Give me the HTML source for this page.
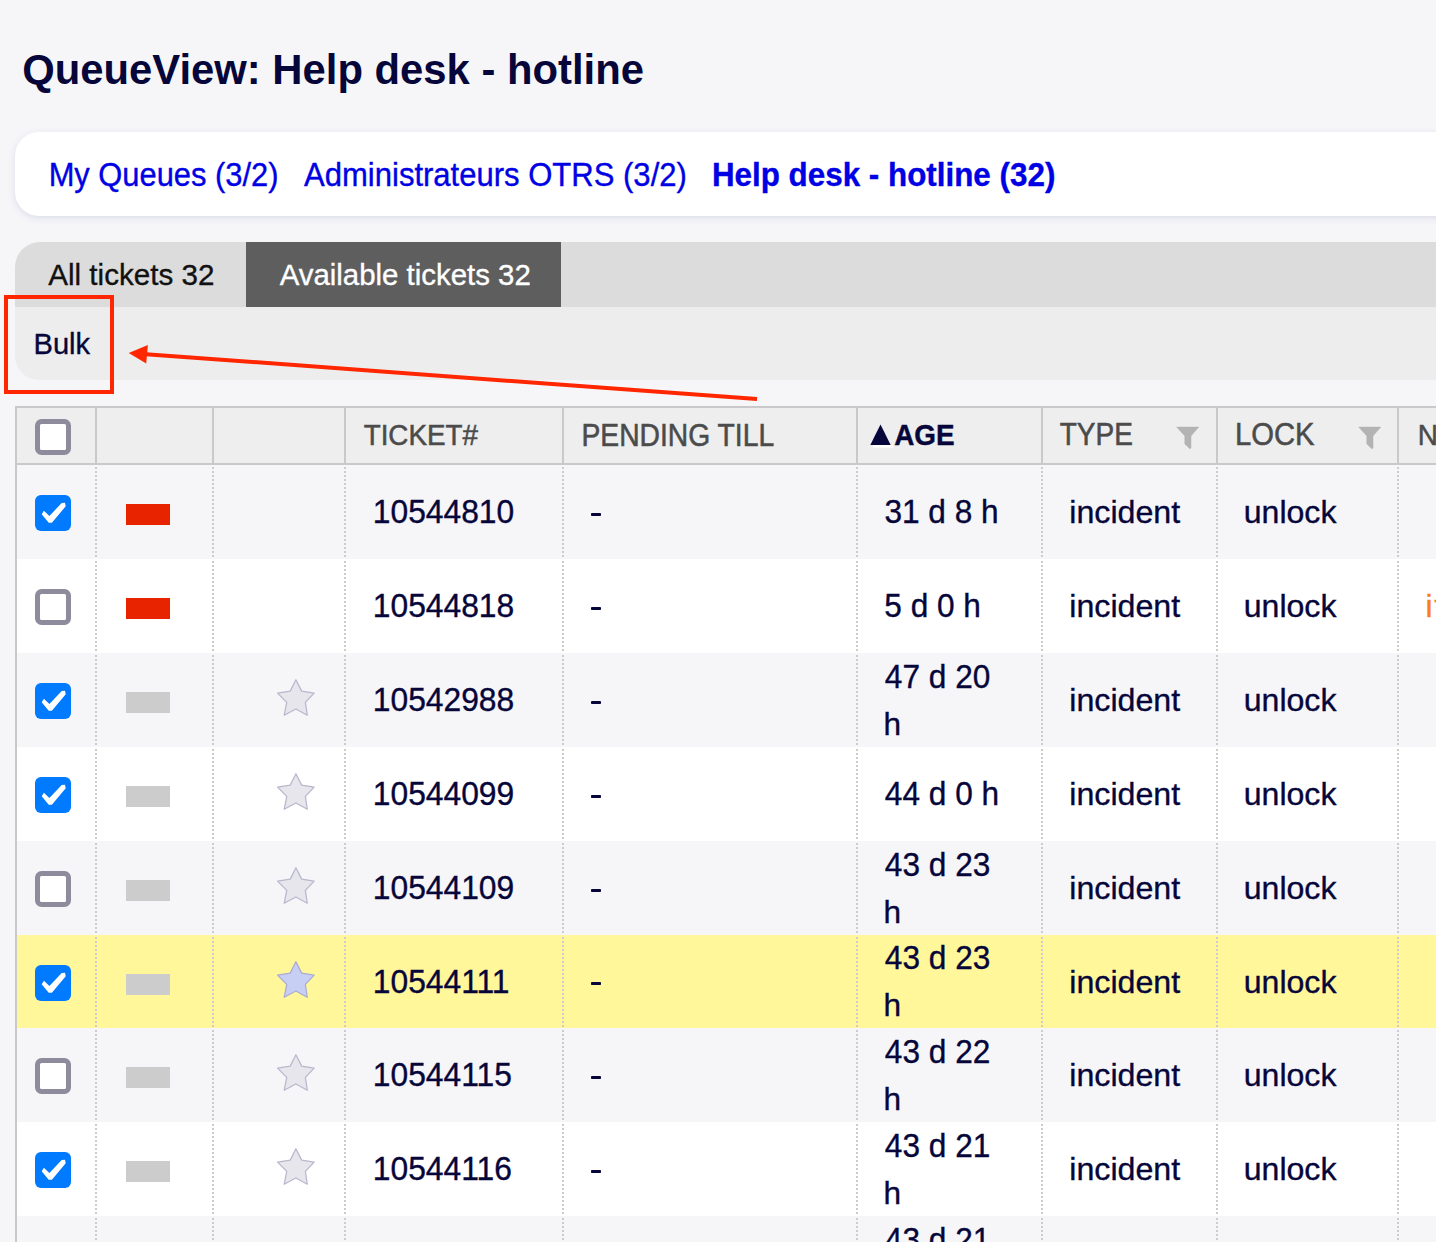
<!DOCTYPE html>
<html><head><meta charset="utf-8"><style>
html,body{margin:0;padding:0;}
body{width:1436px;height:1242px;overflow:hidden;position:relative;background:#f6f6f9;font-family:"Liberation Sans",sans-serif;}
.t{position:absolute;white-space:nowrap;}
.r{position:absolute;}
</style></head><body>
<div class="t" style="left:22.29px;top:37.81px;font-size:41.8px;line-height:63px;color:#06063a;font-weight:bold;-webkit-text-stroke:0px #06063a;">QueueView: Help desk - hotline</div>
<div class="r" style="left:15px;top:132px;width:1500px;height:84px;background:#fff;border-radius:24px;box-shadow:0 2px 7px rgba(50,50,130,0.13);"></div>
<div class="t" style="left:48.67px;top:152.60px;font-size:30.86px;line-height:46px;color:#0000e4;transform:scaleY(1.05);transform-origin:0 33.70px;-webkit-text-stroke:0.35px #0000e4;">My Queues (3/2)</div>
<div class="t" style="left:304.04px;top:152.04px;font-size:31.04px;line-height:47px;color:#0000e4;transform:scaleY(1.05);transform-origin:0 34.26px;-webkit-text-stroke:0.35px #0000e4;">Administrateurs OTRS (3/2)</div>
<div class="t" style="left:711.90px;top:151.92px;font-size:31.38px;line-height:47px;color:#0000e4;font-weight:bold;transform:scaleY(1.03);transform-origin:0 34.38px;-webkit-text-stroke:0.35px #0000e4;">Help desk - hotline (32)</div>
<div class="r" style="left:15px;top:242px;width:1500px;height:65px;background:#dcdcdc;border-top-left-radius:25px;"></div>
<div class="r" style="left:246px;top:242px;width:315px;height:65px;background:#5e5e5e;"></div>
<div class="t" style="left:48.24px;top:252.74px;font-size:29.6px;line-height:44px;color:#111;-webkit-text-stroke:0.35px #111;">All tickets 32</div>
<div class="t" style="left:279.64px;top:252.80px;font-size:29.42px;line-height:44px;color:#fff;-webkit-text-stroke:0.35px #fff;">Available tickets 32</div>
<div class="r" style="left:15px;top:307px;width:1500px;height:73px;background:#ededed;border-bottom-left-radius:24px;"></div>
<div class="t" style="left:33.51px;top:321.91px;font-size:29.1px;line-height:44px;color:#06063a;transform:scaleY(1.04);transform-origin:0 32.09px;-webkit-text-stroke:0.35px #06063a;">Bulk</div>
<div class="r" style="left:15px;top:406px;width:1500px;height:55px;background:#eeeeee;border-top:2px solid #c9c9c9;border-bottom:2px solid #c9c9c9;"></div>
<div class="r" style="left:15px;top:406px;width:2px;height:900px;background:#c9c9c9;"></div>
<div class="r" style="left:17px;top:465.000px;width:1500px;height:94.000px;background:#f6f6f9;"></div>
<div class="r" style="left:17px;top:559.000px;width:1500px;height:94.000px;background:#ffffff;"></div>
<div class="r" style="left:17px;top:653.000px;width:1500px;height:94.000px;background:#f6f6f9;"></div>
<div class="r" style="left:17px;top:747.000px;width:1500px;height:94.000px;background:#ffffff;"></div>
<div class="r" style="left:17px;top:841.000px;width:1500px;height:94.000px;background:#f6f6f9;"></div>
<div class="r" style="left:17px;top:935.000px;width:1500px;height:93.000px;background:#fff79a;"></div>
<div class="r" style="left:17px;top:1028.000px;width:1500px;height:94.000px;background:#f6f6f9;"></div>
<div class="r" style="left:17px;top:1122.000px;width:1500px;height:94.000px;background:#ffffff;"></div>
<div class="r" style="left:17px;top:1216.000px;width:1500px;height:94.000px;background:#f6f6f9;"></div>
<div id="rowsend"></div>
<div class="r" style="left:95px;top:408px;width:2px;height:55px;background:#c9c9c9;"></div>
<div class="r" style="left:95px;top:467px;width:2px;height:92px;background:repeating-linear-gradient(to bottom,#cccccc 0,#cccccc 2px,transparent 2px,transparent 4px);"></div>
<div class="r" style="left:95px;top:561px;width:2px;height:92px;background:repeating-linear-gradient(to bottom,#cccccc 0,#cccccc 2px,transparent 2px,transparent 4px);"></div>
<div class="r" style="left:95px;top:655px;width:2px;height:92px;background:repeating-linear-gradient(to bottom,#cccccc 0,#cccccc 2px,transparent 2px,transparent 4px);"></div>
<div class="r" style="left:95px;top:749px;width:2px;height:92px;background:repeating-linear-gradient(to bottom,#cccccc 0,#cccccc 2px,transparent 2px,transparent 4px);"></div>
<div class="r" style="left:95px;top:843px;width:2px;height:92px;background:repeating-linear-gradient(to bottom,#cccccc 0,#cccccc 2px,transparent 2px,transparent 4px);"></div>
<div class="r" style="left:95px;top:937px;width:2px;height:91px;background:repeating-linear-gradient(to bottom,#cccccc 0,#cccccc 2px,transparent 2px,transparent 4px);"></div>
<div class="r" style="left:95px;top:1030px;width:2px;height:92px;background:repeating-linear-gradient(to bottom,#cccccc 0,#cccccc 2px,transparent 2px,transparent 4px);"></div>
<div class="r" style="left:95px;top:1124px;width:2px;height:92px;background:repeating-linear-gradient(to bottom,#cccccc 0,#cccccc 2px,transparent 2px,transparent 4px);"></div>
<div class="r" style="left:95px;top:1218px;width:2px;height:92px;background:repeating-linear-gradient(to bottom,#cccccc 0,#cccccc 2px,transparent 2px,transparent 4px);"></div>
<div class="r" style="left:212px;top:408px;width:2px;height:55px;background:#c9c9c9;"></div>
<div class="r" style="left:212px;top:467px;width:2px;height:92px;background:repeating-linear-gradient(to bottom,#cccccc 0,#cccccc 2px,transparent 2px,transparent 4px);"></div>
<div class="r" style="left:212px;top:561px;width:2px;height:92px;background:repeating-linear-gradient(to bottom,#cccccc 0,#cccccc 2px,transparent 2px,transparent 4px);"></div>
<div class="r" style="left:212px;top:655px;width:2px;height:92px;background:repeating-linear-gradient(to bottom,#cccccc 0,#cccccc 2px,transparent 2px,transparent 4px);"></div>
<div class="r" style="left:212px;top:749px;width:2px;height:92px;background:repeating-linear-gradient(to bottom,#cccccc 0,#cccccc 2px,transparent 2px,transparent 4px);"></div>
<div class="r" style="left:212px;top:843px;width:2px;height:92px;background:repeating-linear-gradient(to bottom,#cccccc 0,#cccccc 2px,transparent 2px,transparent 4px);"></div>
<div class="r" style="left:212px;top:937px;width:2px;height:91px;background:repeating-linear-gradient(to bottom,#cccccc 0,#cccccc 2px,transparent 2px,transparent 4px);"></div>
<div class="r" style="left:212px;top:1030px;width:2px;height:92px;background:repeating-linear-gradient(to bottom,#cccccc 0,#cccccc 2px,transparent 2px,transparent 4px);"></div>
<div class="r" style="left:212px;top:1124px;width:2px;height:92px;background:repeating-linear-gradient(to bottom,#cccccc 0,#cccccc 2px,transparent 2px,transparent 4px);"></div>
<div class="r" style="left:212px;top:1218px;width:2px;height:92px;background:repeating-linear-gradient(to bottom,#cccccc 0,#cccccc 2px,transparent 2px,transparent 4px);"></div>
<div class="r" style="left:344px;top:408px;width:2px;height:55px;background:#c9c9c9;"></div>
<div class="r" style="left:344px;top:467px;width:2px;height:92px;background:repeating-linear-gradient(to bottom,#cccccc 0,#cccccc 2px,transparent 2px,transparent 4px);"></div>
<div class="r" style="left:344px;top:561px;width:2px;height:92px;background:repeating-linear-gradient(to bottom,#cccccc 0,#cccccc 2px,transparent 2px,transparent 4px);"></div>
<div class="r" style="left:344px;top:655px;width:2px;height:92px;background:repeating-linear-gradient(to bottom,#cccccc 0,#cccccc 2px,transparent 2px,transparent 4px);"></div>
<div class="r" style="left:344px;top:749px;width:2px;height:92px;background:repeating-linear-gradient(to bottom,#cccccc 0,#cccccc 2px,transparent 2px,transparent 4px);"></div>
<div class="r" style="left:344px;top:843px;width:2px;height:92px;background:repeating-linear-gradient(to bottom,#cccccc 0,#cccccc 2px,transparent 2px,transparent 4px);"></div>
<div class="r" style="left:344px;top:937px;width:2px;height:91px;background:repeating-linear-gradient(to bottom,#cccccc 0,#cccccc 2px,transparent 2px,transparent 4px);"></div>
<div class="r" style="left:344px;top:1030px;width:2px;height:92px;background:repeating-linear-gradient(to bottom,#cccccc 0,#cccccc 2px,transparent 2px,transparent 4px);"></div>
<div class="r" style="left:344px;top:1124px;width:2px;height:92px;background:repeating-linear-gradient(to bottom,#cccccc 0,#cccccc 2px,transparent 2px,transparent 4px);"></div>
<div class="r" style="left:344px;top:1218px;width:2px;height:92px;background:repeating-linear-gradient(to bottom,#cccccc 0,#cccccc 2px,transparent 2px,transparent 4px);"></div>
<div class="r" style="left:562px;top:408px;width:2px;height:55px;background:#c9c9c9;"></div>
<div class="r" style="left:562px;top:467px;width:2px;height:92px;background:repeating-linear-gradient(to bottom,#cccccc 0,#cccccc 2px,transparent 2px,transparent 4px);"></div>
<div class="r" style="left:562px;top:561px;width:2px;height:92px;background:repeating-linear-gradient(to bottom,#cccccc 0,#cccccc 2px,transparent 2px,transparent 4px);"></div>
<div class="r" style="left:562px;top:655px;width:2px;height:92px;background:repeating-linear-gradient(to bottom,#cccccc 0,#cccccc 2px,transparent 2px,transparent 4px);"></div>
<div class="r" style="left:562px;top:749px;width:2px;height:92px;background:repeating-linear-gradient(to bottom,#cccccc 0,#cccccc 2px,transparent 2px,transparent 4px);"></div>
<div class="r" style="left:562px;top:843px;width:2px;height:92px;background:repeating-linear-gradient(to bottom,#cccccc 0,#cccccc 2px,transparent 2px,transparent 4px);"></div>
<div class="r" style="left:562px;top:937px;width:2px;height:91px;background:repeating-linear-gradient(to bottom,#cccccc 0,#cccccc 2px,transparent 2px,transparent 4px);"></div>
<div class="r" style="left:562px;top:1030px;width:2px;height:92px;background:repeating-linear-gradient(to bottom,#cccccc 0,#cccccc 2px,transparent 2px,transparent 4px);"></div>
<div class="r" style="left:562px;top:1124px;width:2px;height:92px;background:repeating-linear-gradient(to bottom,#cccccc 0,#cccccc 2px,transparent 2px,transparent 4px);"></div>
<div class="r" style="left:562px;top:1218px;width:2px;height:92px;background:repeating-linear-gradient(to bottom,#cccccc 0,#cccccc 2px,transparent 2px,transparent 4px);"></div>
<div class="r" style="left:856px;top:408px;width:2px;height:55px;background:#c9c9c9;"></div>
<div class="r" style="left:856px;top:467px;width:2px;height:92px;background:repeating-linear-gradient(to bottom,#cccccc 0,#cccccc 2px,transparent 2px,transparent 4px);"></div>
<div class="r" style="left:856px;top:561px;width:2px;height:92px;background:repeating-linear-gradient(to bottom,#cccccc 0,#cccccc 2px,transparent 2px,transparent 4px);"></div>
<div class="r" style="left:856px;top:655px;width:2px;height:92px;background:repeating-linear-gradient(to bottom,#cccccc 0,#cccccc 2px,transparent 2px,transparent 4px);"></div>
<div class="r" style="left:856px;top:749px;width:2px;height:92px;background:repeating-linear-gradient(to bottom,#cccccc 0,#cccccc 2px,transparent 2px,transparent 4px);"></div>
<div class="r" style="left:856px;top:843px;width:2px;height:92px;background:repeating-linear-gradient(to bottom,#cccccc 0,#cccccc 2px,transparent 2px,transparent 4px);"></div>
<div class="r" style="left:856px;top:937px;width:2px;height:91px;background:repeating-linear-gradient(to bottom,#cccccc 0,#cccccc 2px,transparent 2px,transparent 4px);"></div>
<div class="r" style="left:856px;top:1030px;width:2px;height:92px;background:repeating-linear-gradient(to bottom,#cccccc 0,#cccccc 2px,transparent 2px,transparent 4px);"></div>
<div class="r" style="left:856px;top:1124px;width:2px;height:92px;background:repeating-linear-gradient(to bottom,#cccccc 0,#cccccc 2px,transparent 2px,transparent 4px);"></div>
<div class="r" style="left:856px;top:1218px;width:2px;height:92px;background:repeating-linear-gradient(to bottom,#cccccc 0,#cccccc 2px,transparent 2px,transparent 4px);"></div>
<div class="r" style="left:1041px;top:408px;width:2px;height:55px;background:#c9c9c9;"></div>
<div class="r" style="left:1041px;top:467px;width:2px;height:92px;background:repeating-linear-gradient(to bottom,#cccccc 0,#cccccc 2px,transparent 2px,transparent 4px);"></div>
<div class="r" style="left:1041px;top:561px;width:2px;height:92px;background:repeating-linear-gradient(to bottom,#cccccc 0,#cccccc 2px,transparent 2px,transparent 4px);"></div>
<div class="r" style="left:1041px;top:655px;width:2px;height:92px;background:repeating-linear-gradient(to bottom,#cccccc 0,#cccccc 2px,transparent 2px,transparent 4px);"></div>
<div class="r" style="left:1041px;top:749px;width:2px;height:92px;background:repeating-linear-gradient(to bottom,#cccccc 0,#cccccc 2px,transparent 2px,transparent 4px);"></div>
<div class="r" style="left:1041px;top:843px;width:2px;height:92px;background:repeating-linear-gradient(to bottom,#cccccc 0,#cccccc 2px,transparent 2px,transparent 4px);"></div>
<div class="r" style="left:1041px;top:937px;width:2px;height:91px;background:repeating-linear-gradient(to bottom,#cccccc 0,#cccccc 2px,transparent 2px,transparent 4px);"></div>
<div class="r" style="left:1041px;top:1030px;width:2px;height:92px;background:repeating-linear-gradient(to bottom,#cccccc 0,#cccccc 2px,transparent 2px,transparent 4px);"></div>
<div class="r" style="left:1041px;top:1124px;width:2px;height:92px;background:repeating-linear-gradient(to bottom,#cccccc 0,#cccccc 2px,transparent 2px,transparent 4px);"></div>
<div class="r" style="left:1041px;top:1218px;width:2px;height:92px;background:repeating-linear-gradient(to bottom,#cccccc 0,#cccccc 2px,transparent 2px,transparent 4px);"></div>
<div class="r" style="left:1216px;top:408px;width:2px;height:55px;background:#c9c9c9;"></div>
<div class="r" style="left:1216px;top:467px;width:2px;height:92px;background:repeating-linear-gradient(to bottom,#cccccc 0,#cccccc 2px,transparent 2px,transparent 4px);"></div>
<div class="r" style="left:1216px;top:561px;width:2px;height:92px;background:repeating-linear-gradient(to bottom,#cccccc 0,#cccccc 2px,transparent 2px,transparent 4px);"></div>
<div class="r" style="left:1216px;top:655px;width:2px;height:92px;background:repeating-linear-gradient(to bottom,#cccccc 0,#cccccc 2px,transparent 2px,transparent 4px);"></div>
<div class="r" style="left:1216px;top:749px;width:2px;height:92px;background:repeating-linear-gradient(to bottom,#cccccc 0,#cccccc 2px,transparent 2px,transparent 4px);"></div>
<div class="r" style="left:1216px;top:843px;width:2px;height:92px;background:repeating-linear-gradient(to bottom,#cccccc 0,#cccccc 2px,transparent 2px,transparent 4px);"></div>
<div class="r" style="left:1216px;top:937px;width:2px;height:91px;background:repeating-linear-gradient(to bottom,#cccccc 0,#cccccc 2px,transparent 2px,transparent 4px);"></div>
<div class="r" style="left:1216px;top:1030px;width:2px;height:92px;background:repeating-linear-gradient(to bottom,#cccccc 0,#cccccc 2px,transparent 2px,transparent 4px);"></div>
<div class="r" style="left:1216px;top:1124px;width:2px;height:92px;background:repeating-linear-gradient(to bottom,#cccccc 0,#cccccc 2px,transparent 2px,transparent 4px);"></div>
<div class="r" style="left:1216px;top:1218px;width:2px;height:92px;background:repeating-linear-gradient(to bottom,#cccccc 0,#cccccc 2px,transparent 2px,transparent 4px);"></div>
<div class="r" style="left:1397px;top:408px;width:2px;height:55px;background:#c9c9c9;"></div>
<div class="r" style="left:1397px;top:467px;width:2px;height:92px;background:repeating-linear-gradient(to bottom,#cccccc 0,#cccccc 2px,transparent 2px,transparent 4px);"></div>
<div class="r" style="left:1397px;top:561px;width:2px;height:92px;background:repeating-linear-gradient(to bottom,#cccccc 0,#cccccc 2px,transparent 2px,transparent 4px);"></div>
<div class="r" style="left:1397px;top:655px;width:2px;height:92px;background:repeating-linear-gradient(to bottom,#cccccc 0,#cccccc 2px,transparent 2px,transparent 4px);"></div>
<div class="r" style="left:1397px;top:749px;width:2px;height:92px;background:repeating-linear-gradient(to bottom,#cccccc 0,#cccccc 2px,transparent 2px,transparent 4px);"></div>
<div class="r" style="left:1397px;top:843px;width:2px;height:92px;background:repeating-linear-gradient(to bottom,#cccccc 0,#cccccc 2px,transparent 2px,transparent 4px);"></div>
<div class="r" style="left:1397px;top:937px;width:2px;height:91px;background:repeating-linear-gradient(to bottom,#cccccc 0,#cccccc 2px,transparent 2px,transparent 4px);"></div>
<div class="r" style="left:1397px;top:1030px;width:2px;height:92px;background:repeating-linear-gradient(to bottom,#cccccc 0,#cccccc 2px,transparent 2px,transparent 4px);"></div>
<div class="r" style="left:1397px;top:1124px;width:2px;height:92px;background:repeating-linear-gradient(to bottom,#cccccc 0,#cccccc 2px,transparent 2px,transparent 4px);"></div>
<div class="r" style="left:1397px;top:1218px;width:2px;height:92px;background:repeating-linear-gradient(to bottom,#cccccc 0,#cccccc 2px,transparent 2px,transparent 4px);"></div>
<div class="t" style="left:363.68px;top:414.86px;font-size:27.8px;line-height:42px;color:#4b4b4b;transform:scaleY(1.09);transform-origin:0 30.64px;-webkit-text-stroke:0.5px #4b4b4b;">TICKET#</div>
<div class="t" style="left:581.48px;top:414.70px;font-size:28.28px;line-height:42px;color:#4b4b4b;transform:scaleY(1.08);transform-origin:0 30.80px;-webkit-text-stroke:0.5px #4b4b4b;">PENDING TILL</div>
<svg class="r" style="left:860px;top:415px" width="40" height="40"><polygon points="10.3,9.6 20.5,-0.0 30.7,9.6" fill="none"/><polygon points="10.3,29.9 20.5,9.6 30.7,29.9" fill="#06063a"/><rect x="13" y="30" width="20" height="2.6" fill="#fff"/></svg>
<div class="t" style="left:894.21px;top:414.84px;font-size:27.85px;line-height:42px;color:#06063a;font-weight:bold;transform:scaleY(1.08);transform-origin:0 30.66px;-webkit-text-stroke:0.4px #06063a;">AGE</div>
<div class="t" style="left:1059.77px;top:414.79px;font-size:28.0px;line-height:42px;color:#4b4b4b;transform:scaleY(1.09);transform-origin:0 30.71px;-webkit-text-stroke:0.5px #4b4b4b;">TYPE</div>
<div class="t" style="left:1235.10px;top:413.38px;font-size:29.2px;line-height:44px;color:#4b4b4b;transform:scaleY(1.07);transform-origin:0 32.12px;-webkit-text-stroke:0.5px #4b4b4b;">LOCK</div>
<div class="t" style="left:1417.70px;top:414.79px;font-size:28px;line-height:42px;color:#4b4b4b;transform:scaleY(1.08);transform-origin:0 30.71px;-webkit-text-stroke:0.5px #4b4b4b;">N</div>
<svg class="r" style="left:1176px;top:425px" width="26" height="26"><path d="M0.7,2.1 L22.8,2.1 L15,10.9 L15,23 L13.8,23.8 L8.8,19 L8.8,10.9 Z" fill="#b3b3b3" stroke="#b3b3b3" stroke-width="0.5" stroke-linejoin="round"/></svg>
<svg class="r" style="left:1358px;top:425px" width="26" height="26"><path d="M0.7,2.1 L22.8,2.1 L15,10.9 L15,23 L13.8,23.8 L8.8,19 L8.8,10.9 Z" fill="#b3b3b3" stroke="#b3b3b3" stroke-width="0.5" stroke-linejoin="round"/></svg>
<svg class="r" style="left:35px;top:419.00px" width="36" height="36"><rect x="2.5" y="2.5" width="31" height="31" rx="4" fill="#fff" stroke="#8e8c9c" stroke-width="5"/></svg>
<svg class="r" style="left:35px;top:495.00px" width="36" height="36"><rect x="0" y="0" width="36" height="36" rx="6" fill="#007aff"/><polygon points="6.7,19.3 8.9,15.7 14.4,20.9 26.7,8 30,7.8 30.7,11.3 16.9,27.8 13.7,27.8" fill="#fff"/></svg>
<div class="r" style="left:126px;top:504.00px;width:44px;height:21px;background:#e82400;"></div>
<div class="t" style="left:372.78px;top:488.47px;font-size:31.8px;line-height:48px;color:#06063a;transform:scaleY(1.035);transform-origin:0 35.03px;-webkit-text-stroke:0.35px #06063a;">10544810</div>
<div class="r" style="left:591.4px;top:512.80px;width:9.6px;height:2.9px;background:#06063a;border-radius:0.8px;"></div>
<div class="t" style="left:884.40px;top:489.04px;font-size:31.6px;line-height:47px;color:#06063a;transform:scaleY(1.03);transform-origin:0 34.46px;-webkit-text-stroke:0.35px #06063a;">31 d 8 h</div>
<div class="t" style="left:1069.25px;top:488.34px;font-size:32.2px;line-height:48px;color:#06063a;-webkit-text-stroke:0.35px #06063a;">incident</div>
<div class="t" style="left:1243.72px;top:488.37px;font-size:32.1px;line-height:48px;color:#06063a;-webkit-text-stroke:0.35px #06063a;">unlock</div>
<svg class="r" style="left:35px;top:589.00px" width="36" height="36"><rect x="2.5" y="2.5" width="31" height="31" rx="4" fill="#fff" stroke="#8e8c9c" stroke-width="5"/></svg>
<div class="r" style="left:126px;top:598.00px;width:44px;height:21px;background:#e82400;"></div>
<div class="t" style="left:372.78px;top:582.47px;font-size:31.8px;line-height:48px;color:#06063a;transform:scaleY(1.035);transform-origin:0 35.03px;-webkit-text-stroke:0.35px #06063a;">10544818</div>
<div class="r" style="left:591.4px;top:606.80px;width:9.6px;height:2.9px;background:#06063a;border-radius:0.8px;"></div>
<div class="t" style="left:884.33px;top:583.04px;font-size:31.6px;line-height:47px;color:#06063a;transform:scaleY(1.03);transform-origin:0 34.46px;-webkit-text-stroke:0.35px #06063a;">5 d 0 h</div>
<div class="t" style="left:1069.25px;top:582.34px;font-size:32.2px;line-height:48px;color:#06063a;-webkit-text-stroke:0.35px #06063a;">incident</div>
<div class="t" style="left:1243.72px;top:582.37px;font-size:32.1px;line-height:48px;color:#06063a;-webkit-text-stroke:0.35px #06063a;">unlock</div>
<div class="t" style="left:1425.49px;top:583.08px;font-size:31.5px;line-height:47px;color:#ff7a1a;-webkit-text-stroke:0.35px #ff7a1a;">i</div>
<div class="t" style="left:1434.32px;top:583.08px;font-size:31.5px;line-height:47px;color:#ff7a1a;-webkit-text-stroke:0.35px #ff7a1a;">t</div>
<svg class="r" style="left:35px;top:683.00px" width="36" height="36"><rect x="0" y="0" width="36" height="36" rx="6" fill="#007aff"/><polygon points="6.7,19.3 8.9,15.7 14.4,20.9 26.7,8 30,7.8 30.7,11.3 16.9,27.8 13.7,27.8" fill="#fff"/></svg>
<div class="r" style="left:126px;top:692.00px;width:44px;height:21px;background:#cccccc;"></div>
<svg class="r" style="left:270px;top:671.00px" width="50" height="50"><polygon points="25.90,8.72 31.69,20.10 44.14,22.13 35.36,31.39 37.29,44.23 25.90,37.96 14.22,44.23 16.73,31.39 7.56,22.13 20.21,20.10" fill="#e6e6ec" stroke="#b8b8cc" stroke-width="1.25" stroke-linejoin="round"/></svg>
<div class="t" style="left:372.78px;top:676.47px;font-size:31.8px;line-height:48px;color:#06063a;transform:scaleY(1.035);transform-origin:0 35.03px;-webkit-text-stroke:0.35px #06063a;">10542988</div>
<div class="r" style="left:591.4px;top:700.80px;width:9.6px;height:2.9px;background:#06063a;border-radius:0.8px;"></div>
<div class="t" style="left:884.87px;top:653.54px;font-size:31.6px;line-height:47px;color:#06063a;transform:scaleY(1.03);transform-origin:0 34.46px;-webkit-text-stroke:0.35px #06063a;">47 d 20</div>
<div class="t" style="left:883.41px;top:700.54px;font-size:31.6px;line-height:47px;color:#06063a;-webkit-text-stroke:0.35px #06063a;">h</div>
<div class="t" style="left:1069.25px;top:676.34px;font-size:32.2px;line-height:48px;color:#06063a;-webkit-text-stroke:0.35px #06063a;">incident</div>
<div class="t" style="left:1243.72px;top:676.37px;font-size:32.1px;line-height:48px;color:#06063a;-webkit-text-stroke:0.35px #06063a;">unlock</div>
<svg class="r" style="left:35px;top:777.00px" width="36" height="36"><rect x="0" y="0" width="36" height="36" rx="6" fill="#007aff"/><polygon points="6.7,19.3 8.9,15.7 14.4,20.9 26.7,8 30,7.8 30.7,11.3 16.9,27.8 13.7,27.8" fill="#fff"/></svg>
<div class="r" style="left:126px;top:786.00px;width:44px;height:21px;background:#cccccc;"></div>
<svg class="r" style="left:270px;top:765.00px" width="50" height="50"><polygon points="25.90,8.72 31.69,20.10 44.14,22.13 35.36,31.39 37.29,44.23 25.90,37.96 14.22,44.23 16.73,31.39 7.56,22.13 20.21,20.10" fill="#e6e6ec" stroke="#b8b8cc" stroke-width="1.25" stroke-linejoin="round"/></svg>
<div class="t" style="left:372.78px;top:770.47px;font-size:31.8px;line-height:48px;color:#06063a;transform:scaleY(1.035);transform-origin:0 35.03px;-webkit-text-stroke:0.35px #06063a;">10544099</div>
<div class="r" style="left:591.4px;top:794.80px;width:9.6px;height:2.9px;background:#06063a;border-radius:0.8px;"></div>
<div class="t" style="left:884.87px;top:771.04px;font-size:31.6px;line-height:47px;color:#06063a;transform:scaleY(1.03);transform-origin:0 34.46px;-webkit-text-stroke:0.35px #06063a;">44 d 0 h</div>
<div class="t" style="left:1069.25px;top:770.34px;font-size:32.2px;line-height:48px;color:#06063a;-webkit-text-stroke:0.35px #06063a;">incident</div>
<div class="t" style="left:1243.72px;top:770.37px;font-size:32.1px;line-height:48px;color:#06063a;-webkit-text-stroke:0.35px #06063a;">unlock</div>
<svg class="r" style="left:35px;top:871.00px" width="36" height="36"><rect x="2.5" y="2.5" width="31" height="31" rx="4" fill="#fff" stroke="#8e8c9c" stroke-width="5"/></svg>
<div class="r" style="left:126px;top:880.00px;width:44px;height:21px;background:#cccccc;"></div>
<svg class="r" style="left:270px;top:859.00px" width="50" height="50"><polygon points="25.90,8.72 31.69,20.10 44.14,22.13 35.36,31.39 37.29,44.23 25.90,37.96 14.22,44.23 16.73,31.39 7.56,22.13 20.21,20.10" fill="#e6e6ec" stroke="#b8b8cc" stroke-width="1.25" stroke-linejoin="round"/></svg>
<div class="t" style="left:372.78px;top:864.47px;font-size:31.8px;line-height:48px;color:#06063a;transform:scaleY(1.035);transform-origin:0 35.03px;-webkit-text-stroke:0.35px #06063a;">10544109</div>
<div class="r" style="left:591.4px;top:888.80px;width:9.6px;height:2.9px;background:#06063a;border-radius:0.8px;"></div>
<div class="t" style="left:884.87px;top:841.54px;font-size:31.6px;line-height:47px;color:#06063a;transform:scaleY(1.03);transform-origin:0 34.46px;-webkit-text-stroke:0.35px #06063a;">43 d 23</div>
<div class="t" style="left:883.41px;top:888.54px;font-size:31.6px;line-height:47px;color:#06063a;-webkit-text-stroke:0.35px #06063a;">h</div>
<div class="t" style="left:1069.25px;top:864.34px;font-size:32.2px;line-height:48px;color:#06063a;-webkit-text-stroke:0.35px #06063a;">incident</div>
<div class="t" style="left:1243.72px;top:864.37px;font-size:32.1px;line-height:48px;color:#06063a;-webkit-text-stroke:0.35px #06063a;">unlock</div>
<svg class="r" style="left:35px;top:964.50px" width="36" height="36"><rect x="0" y="0" width="36" height="36" rx="6" fill="#007aff"/><polygon points="6.7,19.3 8.9,15.7 14.4,20.9 26.7,8 30,7.8 30.7,11.3 16.9,27.8 13.7,27.8" fill="#fff"/></svg>
<div class="r" style="left:126px;top:973.50px;width:44px;height:21px;background:#cccccc;"></div>
<svg class="r" style="left:270px;top:952.50px" width="50" height="50"><polygon points="25.90,8.72 31.69,20.10 44.14,22.13 35.36,31.39 37.29,44.23 25.90,37.96 14.22,44.23 16.73,31.39 7.56,22.13 20.21,20.10" fill="#c8cff5" stroke="#a9abd3" stroke-width="1.25" stroke-linejoin="round"/></svg>
<div class="t" style="left:372.78px;top:957.97px;font-size:31.8px;line-height:48px;color:#06063a;transform:scaleY(1.035);transform-origin:0 35.03px;-webkit-text-stroke:0.35px #06063a;">10544111</div>
<div class="r" style="left:591.4px;top:982.30px;width:9.6px;height:2.9px;background:#06063a;border-radius:0.8px;"></div>
<div class="t" style="left:884.87px;top:935.04px;font-size:31.6px;line-height:47px;color:#06063a;transform:scaleY(1.03);transform-origin:0 34.46px;-webkit-text-stroke:0.35px #06063a;">43 d 23</div>
<div class="t" style="left:883.41px;top:982.04px;font-size:31.6px;line-height:47px;color:#06063a;-webkit-text-stroke:0.35px #06063a;">h</div>
<div class="t" style="left:1069.25px;top:957.84px;font-size:32.2px;line-height:48px;color:#06063a;-webkit-text-stroke:0.35px #06063a;">incident</div>
<div class="t" style="left:1243.72px;top:957.87px;font-size:32.1px;line-height:48px;color:#06063a;-webkit-text-stroke:0.35px #06063a;">unlock</div>
<svg class="r" style="left:35px;top:1058.00px" width="36" height="36"><rect x="2.5" y="2.5" width="31" height="31" rx="4" fill="#fff" stroke="#8e8c9c" stroke-width="5"/></svg>
<div class="r" style="left:126px;top:1067.00px;width:44px;height:21px;background:#cccccc;"></div>
<svg class="r" style="left:270px;top:1046.00px" width="50" height="50"><polygon points="25.90,8.72 31.69,20.10 44.14,22.13 35.36,31.39 37.29,44.23 25.90,37.96 14.22,44.23 16.73,31.39 7.56,22.13 20.21,20.10" fill="#e6e6ec" stroke="#b8b8cc" stroke-width="1.25" stroke-linejoin="round"/></svg>
<div class="t" style="left:372.78px;top:1051.47px;font-size:31.8px;line-height:48px;color:#06063a;transform:scaleY(1.035);transform-origin:0 35.03px;-webkit-text-stroke:0.35px #06063a;">10544115</div>
<div class="r" style="left:591.4px;top:1075.80px;width:9.6px;height:2.9px;background:#06063a;border-radius:0.8px;"></div>
<div class="t" style="left:884.87px;top:1028.54px;font-size:31.6px;line-height:47px;color:#06063a;transform:scaleY(1.03);transform-origin:0 34.46px;-webkit-text-stroke:0.35px #06063a;">43 d 22</div>
<div class="t" style="left:883.41px;top:1075.54px;font-size:31.6px;line-height:47px;color:#06063a;-webkit-text-stroke:0.35px #06063a;">h</div>
<div class="t" style="left:1069.25px;top:1051.34px;font-size:32.2px;line-height:48px;color:#06063a;-webkit-text-stroke:0.35px #06063a;">incident</div>
<div class="t" style="left:1243.72px;top:1051.37px;font-size:32.1px;line-height:48px;color:#06063a;-webkit-text-stroke:0.35px #06063a;">unlock</div>
<svg class="r" style="left:35px;top:1152.00px" width="36" height="36"><rect x="0" y="0" width="36" height="36" rx="6" fill="#007aff"/><polygon points="6.7,19.3 8.9,15.7 14.4,20.9 26.7,8 30,7.8 30.7,11.3 16.9,27.8 13.7,27.8" fill="#fff"/></svg>
<div class="r" style="left:126px;top:1161.00px;width:44px;height:21px;background:#cccccc;"></div>
<svg class="r" style="left:270px;top:1140.00px" width="50" height="50"><polygon points="25.90,8.72 31.69,20.10 44.14,22.13 35.36,31.39 37.29,44.23 25.90,37.96 14.22,44.23 16.73,31.39 7.56,22.13 20.21,20.10" fill="#e6e6ec" stroke="#b8b8cc" stroke-width="1.25" stroke-linejoin="round"/></svg>
<div class="t" style="left:372.78px;top:1145.47px;font-size:31.8px;line-height:48px;color:#06063a;transform:scaleY(1.035);transform-origin:0 35.03px;-webkit-text-stroke:0.35px #06063a;">10544116</div>
<div class="r" style="left:591.4px;top:1169.80px;width:9.6px;height:2.9px;background:#06063a;border-radius:0.8px;"></div>
<div class="t" style="left:884.87px;top:1122.54px;font-size:31.6px;line-height:47px;color:#06063a;transform:scaleY(1.03);transform-origin:0 34.46px;-webkit-text-stroke:0.35px #06063a;">43 d 21</div>
<div class="t" style="left:883.41px;top:1169.54px;font-size:31.6px;line-height:47px;color:#06063a;-webkit-text-stroke:0.35px #06063a;">h</div>
<div class="t" style="left:1069.25px;top:1145.34px;font-size:32.2px;line-height:48px;color:#06063a;-webkit-text-stroke:0.35px #06063a;">incident</div>
<div class="t" style="left:1243.72px;top:1145.37px;font-size:32.1px;line-height:48px;color:#06063a;-webkit-text-stroke:0.35px #06063a;">unlock</div>
<svg class="r" style="left:35px;top:1246.00px" width="36" height="36"><rect x="2.5" y="2.5" width="31" height="31" rx="4" fill="#fff" stroke="#8e8c9c" stroke-width="5"/></svg>
<div class="r" style="left:126px;top:1255.00px;width:44px;height:21px;background:#cccccc;"></div>
<div class="t" style="left:372.78px;top:1239.47px;font-size:31.8px;line-height:48px;color:#06063a;transform:scaleY(1.035);transform-origin:0 35.03px;-webkit-text-stroke:0.35px #06063a;">10544117</div>
<div class="r" style="left:591.4px;top:1263.80px;width:9.6px;height:2.9px;background:#06063a;border-radius:0.8px;"></div>
<div class="t" style="left:884.87px;top:1216.54px;font-size:31.6px;line-height:47px;color:#06063a;transform:scaleY(1.03);transform-origin:0 34.46px;-webkit-text-stroke:0.35px #06063a;">43 d 21</div>
<div class="t" style="left:883.41px;top:1263.54px;font-size:31.6px;line-height:47px;color:#06063a;-webkit-text-stroke:0.35px #06063a;">h</div>
<div class="t" style="left:1069.25px;top:1239.34px;font-size:32.2px;line-height:48px;color:#06063a;-webkit-text-stroke:0.35px #06063a;">incident</div>
<div class="t" style="left:1243.72px;top:1239.37px;font-size:32.1px;line-height:48px;color:#06063a;-webkit-text-stroke:0.35px #06063a;">unlock</div>
<svg class="r" style="left:0;top:0" width="1436" height="1242">
<rect x="6" y="297" width="106" height="95" fill="none" stroke="#ff2600" stroke-width="4"/>
<line x1="757" y1="399" x2="146" y2="354.2" stroke="#ff2600" stroke-width="4"/>
<polygon points="128.7,353.1 147.9,345 146.2,363.4" fill="#ff2600"/>
</svg>
</body></html>
